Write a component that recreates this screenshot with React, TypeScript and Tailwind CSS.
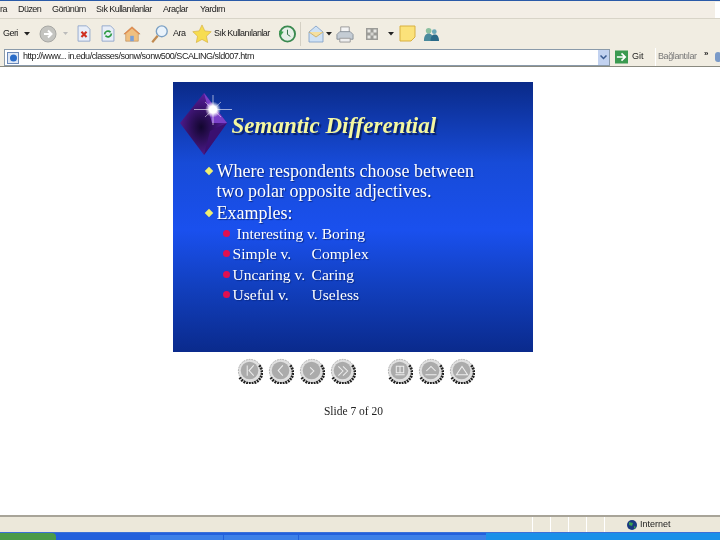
import React from "react";

const Doc = ({ children }: { children: React.ReactNode }) => (
  <svg width="16" height="17" viewBox="0 0 18 20">
    <path d="M2 1h10l4 4v14H2z" fill="#e8eef8" stroke="#8aa0c8" />
    {children}
  </svg>
);

const Slot = ({ w, children }: { w: number; children?: React.ReactNode }) => (
  <div className="flex shrink-0 items-center" style={{ width: w }}>
    {children}
  </div>
);

const Caret = () => (
  <svg width="6" height="4" viewBox="0 0 6 4">
    <path d="M0 0h6L3 3.500z" fill="#222" />
  </svg>
);

const NavBtn = ({ glyph }: { glyph: string }) => (
  <svg width="26" height="26" viewBox="0 0 28 28">
    <circle cx="14" cy="14" r="12.500" fill="#e0e0e0" stroke="#aaa" strokeDasharray="2 1" />
    <path d="M3 21a13 13 0 0 0 24-4 13 13 0 0 0-3-9" fill="none" stroke="#222" strokeWidth="3" strokeDasharray="2 1" />
    <circle cx="13.500" cy="13.500" r="9.500" fill="#ababab" />
    <path d={glyph} fill="none" stroke="#eee" strokeWidth="1.100" />
  </svg>
);

const glyphs = [
  "M11 8v11M18 8l-5 5.500 5 5.500",
  "M16 8l-5 5.500 5 5.500",
  "M12 10l4 4-4 4",
  "M9 9l5 5-5 5M14 9l5 5-5 5",
];
const glyphs2 = [
  "M9 18h10M10 9h8v7h-8zM14 9v7",
  "M8 18h12M9 14l5-5 5 5",
  "M8 18h12L14 9z",
];

export default function App() {
  return (
    <div className="flex h-[540px] w-[720px] flex-col overflow-hidden bg-white font-['Liberation_Sans',sans-serif] blur-[0.3px]">
      <div className="h-px shrink-0 bg-[#2a5aa8]" />
      {/* menu */}
      <div className="flex h-[17px] shrink-0 items-center overflow-hidden bg-[#f3eee6] pt-px text-[9px] tracking-[-0.55px] text-[#222]">
        <span className="w-[18px]">ra</span>
        <span className="w-[34px]">Düzen</span>
        <span className="w-[44px]">Görünüm</span>
        <span className="w-[67px]">Sık Kullanılanlar</span>
        <span className="w-[37px]">Araçlar</span>
        <span className="w-[40px]">Yardım</span>
        <div className="ml-auto h-full w-[5px] bg-white" />
      </div>
      {/* toolbar */}
      <div className="flex h-[30px] shrink-0 items-center border-t border-[#d8d4c8] bg-[#f1ede2] text-[9px] tracking-[-0.55px] text-[#222]">
        <Slot w={24}><span className="ml-[3px]">Geri</span></Slot>
        <Slot w={15}><Caret /></Slot>
        <Slot w={24}>
          <svg width="18" height="18" viewBox="0 0 18 18">
            <circle cx="9" cy="9" r="8" fill="#c4c4c0" stroke="#a8a8a4" />
            <path d="M5 9h7M9 5.500L12.500 9 9 12.500" stroke="#fff" strokeWidth="2" fill="none" />
          </svg>
        </Slot>
        <Slot w={13}><svg width="5" height="3" viewBox="0 0 5 3"><path d="M0 0h5L2.500 3z" fill="#bbb" /></svg></Slot>
        <Slot w={24}>
          <Doc><path d="M6 8l6 6M12 8l-6 6" stroke="#d03020" strokeWidth="2.500" /></Doc>
        </Slot>
        <Slot w={23}>
          <Doc><path d="M5 11a4 4 0 0 1 7-2.500M13 10a4 4 0 0 1-7 2.500" stroke="#2a9a40" strokeWidth="2" fill="none" /></Doc>
        </Slot>
        <Slot w={27}>
          <svg width="18" height="18" viewBox="0 0 20 20">
            <path d="M1 10l9-8 9 8h-2v8H3v-8z" fill="#f0c080" stroke="#b08050" strokeWidth=".6" />
            <path d="M10 2l9 8h-2l-7-6-7 6H1z" fill="#e08a50" />
            <rect x="8" y="12" width="4" height="6" fill="#7aa0d8" />
          </svg>
        </Slot>
        <Slot w={23}>
          <svg width="19" height="20" viewBox="0 0 20 22">
            <circle cx="12.500" cy="8" r="6" fill="#eaf3fb" stroke="#7ba0c4" strokeWidth="1.500" />
            <path d="M8 13l-6 7" stroke="#c08a50" strokeWidth="2.500" />
          </svg>
        </Slot>
        <Slot w={19}><span>Ara</span></Slot>
        <Slot w={22}>
          <svg width="20" height="19" viewBox="0 0 21 20">
            <path d="M10.500 1l3 6.300 6.700.8-5 4.700 1.300 6.700-6-3.300-6 3.300 1.300-6.700-5-4.700 6.700-.8z" fill="#f7dd50" stroke="#d8b040" strokeWidth=".7" />
          </svg>
        </Slot>
        <Slot w={64}><span className="whitespace-nowrap">Sık Kullanılanlar</span></Slot>
        <Slot w={22}>
          <svg width="18" height="18" viewBox="0 0 19 19">
            <circle cx="10" cy="9.500" r="8" fill="#e6efe8" stroke="#3a8a50" strokeWidth="2" />
            <path d="M10 5v5l3 2" stroke="#2a6a40" fill="none" />
            <path d="M1 6l5 1-3 4z" fill="#3aa050" />
          </svg>
        </Slot>
        <div className="mr-[7px] h-[24px] w-px bg-[#d4d0c4]" />
        <Slot w={18}>
          <svg width="16" height="18" viewBox="0 0 16 18">
            <path d="M1 7L8 1l7 6v10H1z" fill="#cfe2f5" stroke="#7c9cc4" strokeWidth=".8" />
            <path d="M1 7l7 5 7-5" fill="#f5e0a0" stroke="#c8a860" strokeWidth=".8" />
          </svg>
        </Slot>
        <Slot w={10}><Caret /></Slot>
        <Slot w={30}>
          <svg width="18" height="18" viewBox="0 0 19 19">
            <path d="M5 2h9v6H5z" fill="#f4f4f4" stroke="#999" />
            <path d="M1 10l3-3h11l3 3v5H1z" fill="#c4ccd4" stroke="#8a929c" />
            <path d="M4 14h11v4H4z" fill="#eee" stroke="#999" />
          </svg>
        </Slot>
        <Slot w={22}>
          <svg width="12" height="12" viewBox="0 0 12 12">
            <rect width="12" height="12" fill="#9c9c98" />
            <rect x="1.500" y="1.500" width="3" height="3" fill="#e8e8e4" />
            <rect x="7.500" y="1.500" width="3" height="3" fill="#e8e8e4" />
            <rect x="1.500" y="7.500" width="3" height="3" fill="#e8e8e4" />
            <rect x="7.500" y="7.500" width="3" height="3" fill="#e8e8e4" />
            <rect x="4.500" y="4.500" width="3" height="3" fill="#d4d4d0" />
          </svg>
        </Slot>
        <Slot w={11}><Caret /></Slot>
        <Slot w={23}>
          <svg width="17" height="17" viewBox="0 0 17 17">
            <path d="M1 1h15v11l-4 4H1z" fill="#fbe27a" stroke="#d8b040" />
          </svg>
        </Slot>
        <Slot w={22}>
          <svg width="18" height="16" viewBox="0 0 19 17">
            <circle cx="7" cy="5" r="3" fill="#8cc0a0" />
            <path d="M2 16c0-6 2-8 5-8s5 2 5 8z" fill="#4a8a9c" />
            <circle cx="13" cy="6" r="2.500" fill="#6aa8b8" />
            <path d="M9 16c0-5 2-7 4.500-7s4.500 2 4.500 7z" fill="#2a6a88" />
          </svg>
        </Slot>
      </div>
      {/* address */}
      <div className="flex h-[18px] shrink-0 items-center bg-[#f1ede2] text-[9px] text-[#222]">
        <div className="ml-[4px] flex h-[17px] w-[606px] items-center border border-[#8a9aaa] bg-white">
          <svg className="ml-[2px] mr-[3px] shrink-0" width="13" height="13" viewBox="0 0 13 13">
            <rect x=".5" y="1.500" width="11" height="11" fill="#dfe8f5" stroke="#6a88b8" />
            <circle cx="6.500" cy="7" r="3.500" fill="#2a6cc8" />
          </svg>
          <span className="whitespace-nowrap tracking-[-0.47px]">http://www... in.edu/classes/sonw/sonw500/SCALING/sld007.htm</span>
          <div className="ml-auto flex h-full w-[11px] items-center justify-center bg-[#c2d2f0]">
            <svg width="7" height="5" viewBox="0 0 7 5"><path d="M.5.5l3 3 3-3" stroke="#3a5a90" strokeWidth="1.500" fill="none" /></svg>
          </div>
        </div>
        <svg className="ml-[5px] shrink-0" width="13" height="14" viewBox="0 0 14 14">
          <rect width="14" height="14" fill="#3a9a50" />
          <path d="M2 7h9M7 3l4 4-4 4" stroke="#fff" strokeWidth="1.800" fill="none" />
        </svg>
        <span className="ml-[4px] w-[23px]">Git</span>
        <div className="h-full w-px bg-white" />
        <span className="ml-[2px] w-[46px] whitespace-nowrap tracking-[-0.4px] text-[#777]">Bağlantılar</span>
        <span className="mt-[-6px] text-[8px] font-bold leading-none">»</span>
        <div className="ml-auto mr-[-1px] h-[10px] w-[6px] rounded-full bg-[#7a9ac8]" />
      </div>
      {/* content */}
      <div className="flex min-h-0 flex-1 flex-col items-center border-t border-[#8a8a80] font-['Liberation_Serif',serif]">
        <div className="ml-[-15px] mt-[15px] flex h-[270px] w-[360px] shrink-0 flex-col bg-[linear-gradient(180deg,#0a2a88_0%,#174bd8_30%,#1a50ee_55%,#1240c0_75%,#0a2a8c_100%)] pl-[31px] text-white">
          <div className="ml-[-24px] mt-[9px] flex h-[68px] items-center">
            <svg className="shrink-0" width="60" height="68" viewBox="0 0 60 68">
              <defs>
                <radialGradient id="gem" cx=".45" cy=".55" r=".55">
                  <stop offset="0" stopColor="#12062e" />
                  <stop offset="1" stopColor="#5a1ea0" />
                </radialGradient>
                <radialGradient id="glow" cx=".5" cy=".5" r=".5">
                  <stop offset="0" stopColor="#fff" />
                  <stop offset=".45" stopColor="#fff" />
                  <stop offset="1" stopColor="#fff" stopOpacity="0" />
                </radialGradient>
              </defs>
              <path d="M24 2L47 32 24 64 0 32z" fill="url(#gem)" />
              <path d="M24 2L47 32H32z" fill="#7a40c8" />
              <path d="M24 64L47 32 30 40z" fill="#3a1070" />
              <path d="M14 18.500h38M33 4v30" stroke="#fff" strokeWidth=".6" />
              <path d="M25 11l16 15M41 11L25 26" stroke="#fff" strokeWidth=".5" />
              <circle cx="33" cy="18.500" r="8" fill="url(#glow)" />
            </svg>
            <h1 className="ml-[-8px] mt-[2px] whitespace-nowrap text-[23px] font-bold italic text-[#f4f7a0] [text-shadow:2px_2px_1px_#08206a]">
              Semantic Differential
            </h1>
          </div>
          <ul className="mt-[2px] text-[18px] leading-[20px] [text-shadow:1px_1px_1px_#0a2a88]">
            <li className="relative pl-[13px]">
              <span className="absolute left-[2px] top-[7px] size-[6px] rotate-45 bg-[#f0f070]" />
              Where respondents choose between<br />two polar opposite adjectives.
            </li>
            <li className="relative mt-[2px] pl-[13px]">
              <span className="absolute left-[2px] top-[7px] size-[6px] rotate-45 bg-[#f0f070]" />
              Examples:
            </li>
          </ul>
          <div className="ml-[19px] mt-[3px] flex flex-col gap-[5px] text-[15.600px] leading-[15.300px] [text-shadow:1px_1px_1px_#0a2a88]">
            {[
              ["Interesting v. Boring", ""],
              ["Simple v.", "Complex"],
              ["Uncaring v.", "Caring"],
              ["Useful v.", "Useless"],
            ].map(([a, b], i) => (
              <div key={a} className="flex items-center whitespace-nowrap">
                <span className="size-[7px] shrink-0 rounded-full bg-[#e01050]" />
                <span className={i === 0 ? "ml-[7px]" : "ml-[3px] w-[79px]"}>{a}</span>
                {b && <span>{b}</span>}
              </div>
            ))}
          </div>
        </div>
        <div className="ml-[-8px] mt-[6px] flex items-center">
          <div className="flex gap-[5px]">{glyphs.map((g) => <NavBtn key={g} glyph={g} />)}</div>
          <div className="ml-[31px] flex gap-[5px]">{glyphs2.map((g) => <NavBtn key={g} glyph={g} />)}</div>
        </div>
        <div className="ml-[-13px] mt-[21px] text-[11.500px] leading-[12px] text-[#222]">Slide 7 of 20</div>
      </div>
      {/* status */}
      <div className="flex h-[17px] shrink-0 items-center border-t-2 border-[#a8a498] bg-[#ece8da] text-[9px] text-[#222]">
        <div className="ml-[532px] flex h-full">
          {[0, 1, 2, 3, 4].map((i) => <div key={i} className="w-[18px] border-l border-white" />)}
        </div>
        <svg className="ml-[5px] mr-[3px]" width="10" height="10" viewBox="0 0 10 10">
          <circle cx="5" cy="5" r="5" fill="#1a3a80" />
          <path d="M2 2l4 1-1 3-3-1zM7 6l2 1-2 2z" fill="#3aa050" />
        </svg>
        <span>Internet</span>
      </div>
      {/* taskbar */}
      <div className="flex h-[8px] shrink-0 border-t border-[#3a70d8] bg-[#2260dc]">
        <div className="h-full w-[56px] rounded-tr-[4px] bg-[#4a9a4a]" />
        <div className="ml-[94px] mt-[2px] h-full w-[73px] bg-[#3c80e8]" />
        <div className="ml-[1px] mt-[2px] h-full w-[74px] bg-[#3c80e8]" />
        <div className="ml-[1px] mt-[2px] h-full w-[187px] bg-[#3c80e8]" />
        <div className="ml-auto h-full w-[234px] bg-[#1a90e8]" />
      </div>
    </div>
  );
}
